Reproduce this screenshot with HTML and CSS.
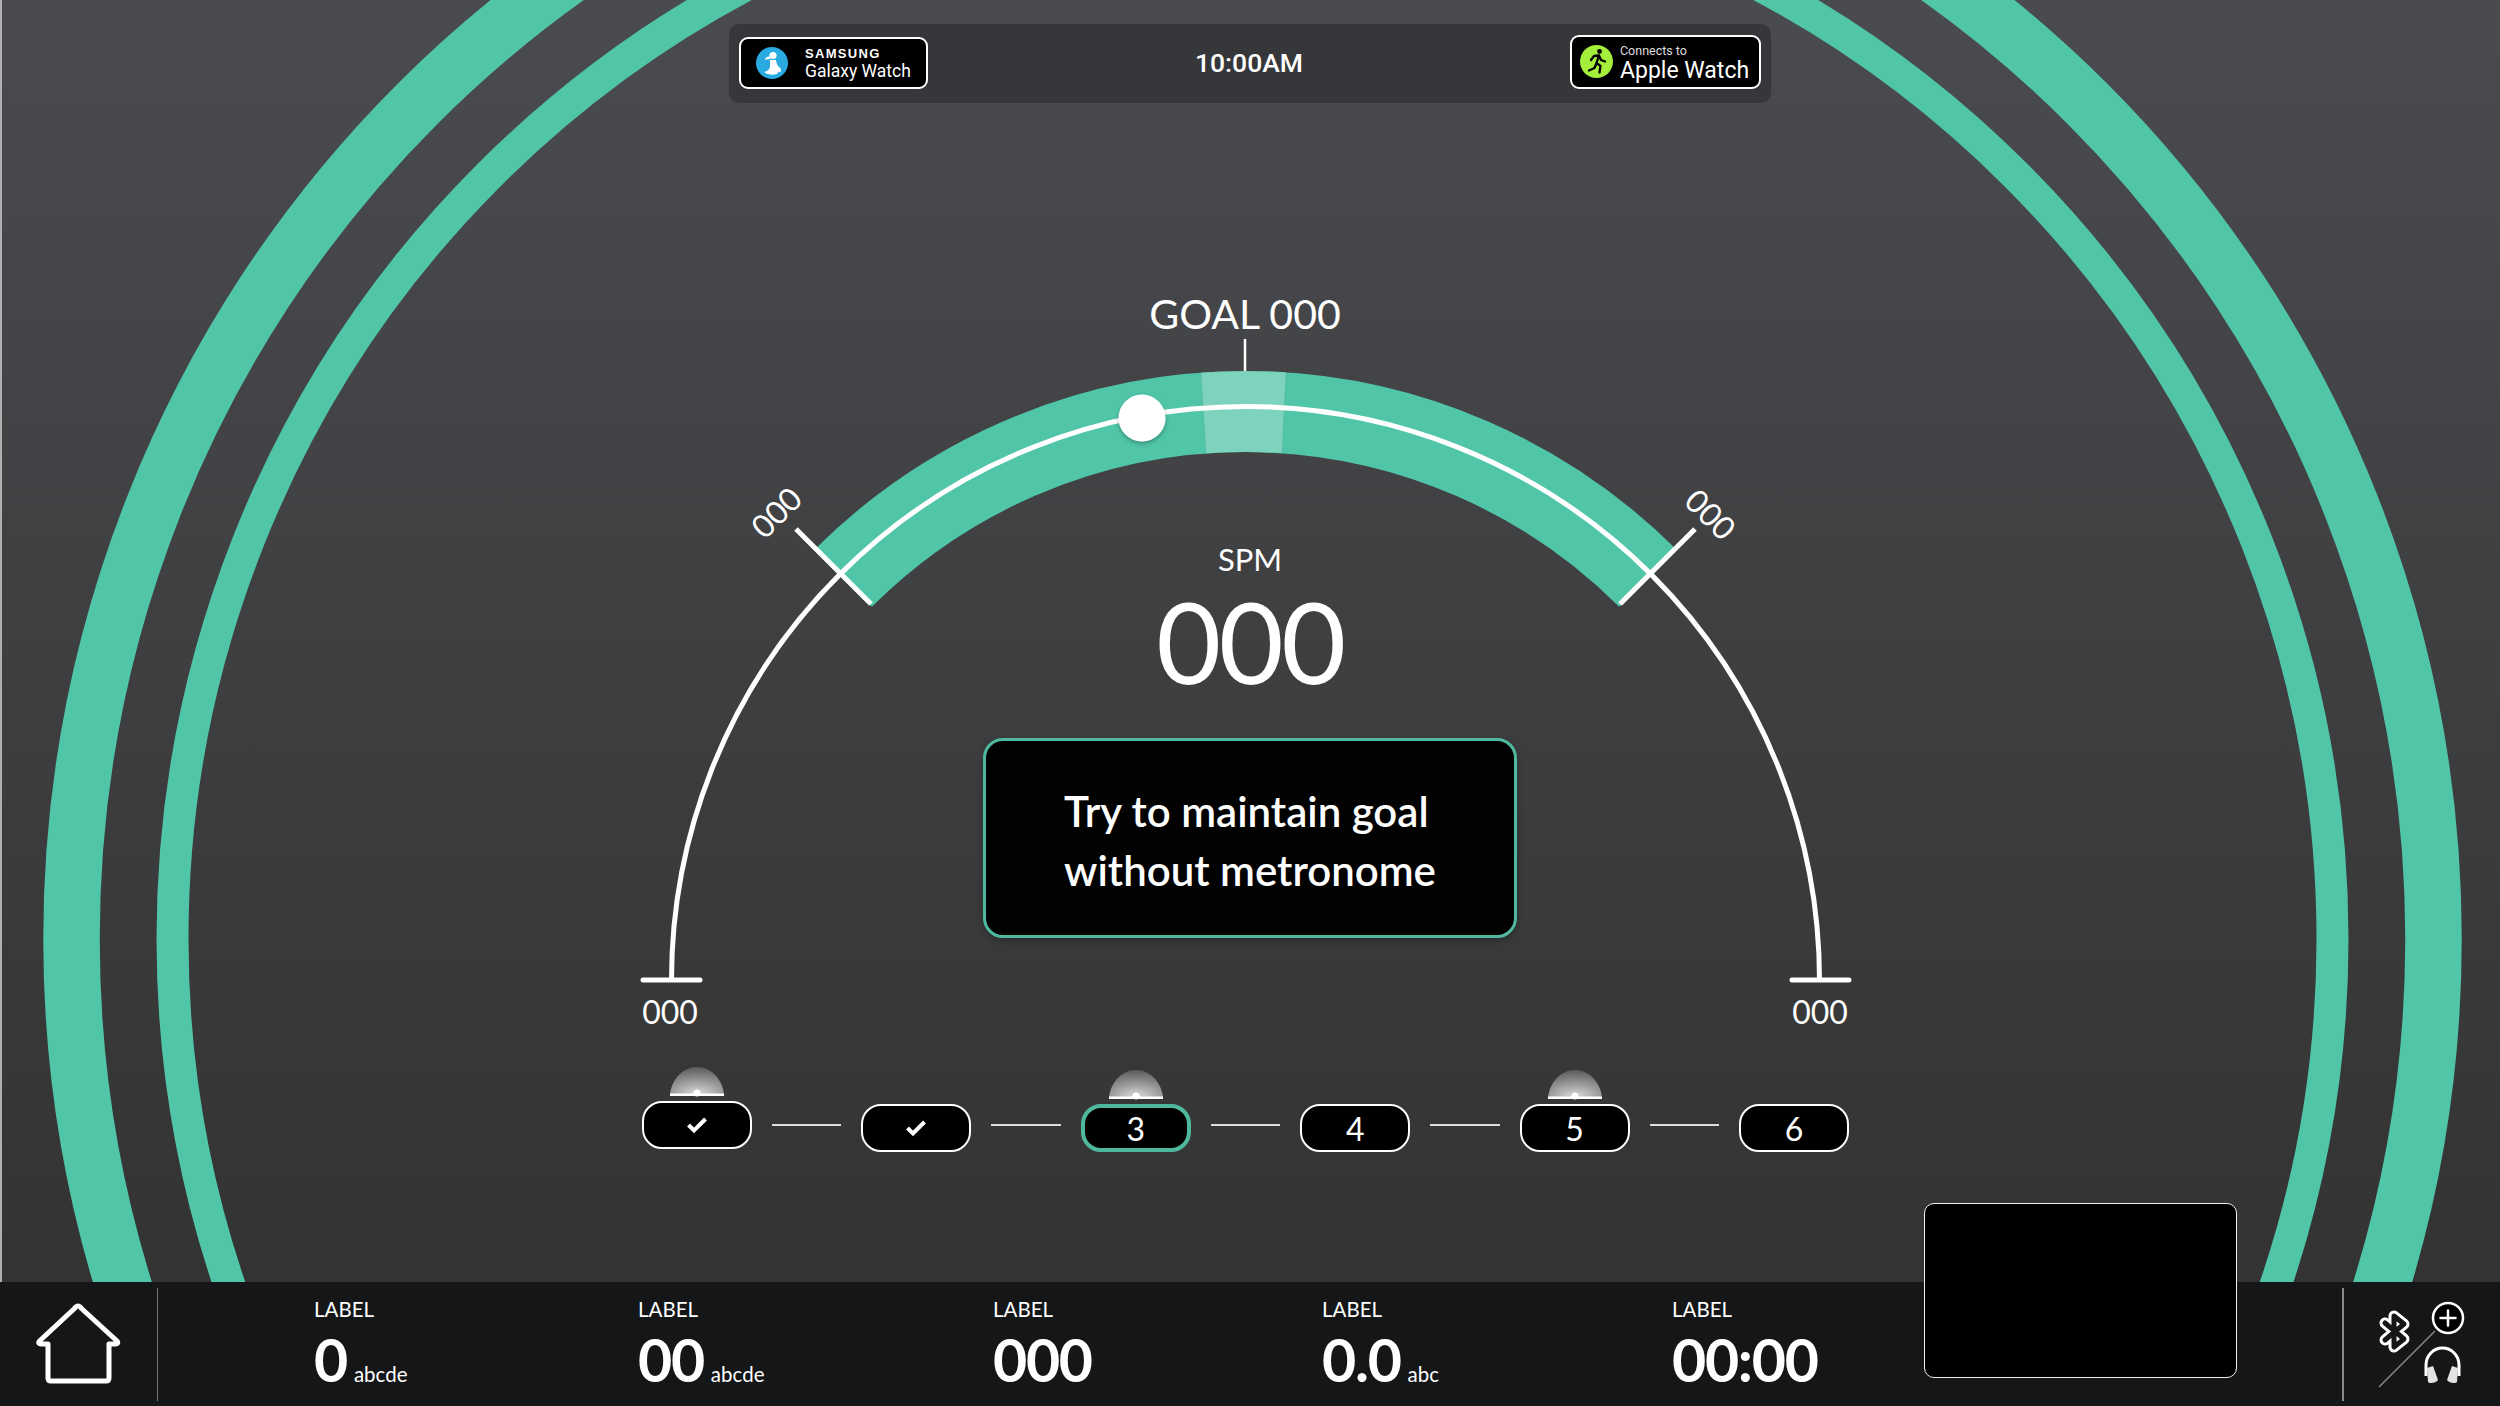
FILE: index.html
```html
<!DOCTYPE html>
<html lang="en">
<head>
  <meta charset="UTF-8" />
  <title>Cadence Workout</title>
  <link rel="stylesheet" href="styles.css">
</head>
<body>

  <main class="stage">
    <!-- rings and gauge are drawn on one canvas behind the content -->
    <svg class="canvas" viewBox="0 0 2500 1282" width="2500" height="1282">
      <defs>
        <filter id="dotShadow" x="-30%" y="-30%" width="160%" height="160%">
          <feDropShadow dx="0" dy="2" stdDeviation="2" flood-color="#000" flood-opacity="0.3"/>
        </filter>
      </defs>
      <circle class="ring" cx="1252.5" cy="939" r="1181" stroke-width="56.5"/>
      <circle class="ring" cx="1252.5" cy="939" r="1080" stroke-width="32"/>

      <path class="band" d="M843.2 578.2 A569 569 0 0 1 1647.8 578.2"/>
      <path class="goal-zone" d="M1201 372.6 A609.5 609.5 0 0 1 1286 372.3 L1282 453.3 A528.5 528.5 0 0 0 1206 453.5 Z"/>
      <path class="track" d="M671.5 980.5 A574 574 0 0 1 1819.5 980.5"/>
      <circle class="dot" cx="1142" cy="418" r="23.5" filter="url(#dotShadow)"/>

      <path class="tick" d="M1245 339 V371"/>
      <path class="tick-thick" d="M796 529 L871 604 M1695 529 L1620 604"/>
      <path class="tick-end" d="M643 980 H700 M1792 980 H1849"/>

      <text class="goal-text" x="1245" y="329">GOAL 000</text>
      <text class="limit-text" x="670" y="1024">000</text>
      <text class="limit-text" x="1820" y="1024">000</text>
      <text class="limit-text" transform="translate(777 513) rotate(-45)" y="11">000</text>
      <text class="limit-text" transform="translate(1710 515) rotate(45)" y="11">000</text>
    </svg>

    <div class="top-bar">
      <div class="badge badge-samsung">
        <svg class="badge-icon" viewBox="0 0 32 32" width="32" height="32">
          <circle cx="16" cy="16" r="16" fill="#29abe2"/>
          <circle cx="17" cy="8.5" r="3.6" fill="#fff"/>
          <path d="M14.5 9.5 C11 9 9.5 11 8.5 13 C10.5 12 12 12 13.5 12.5 Z" fill="#fff"/>
          <path d="M14 13 H20 C20.5 16 21 18 23 20 C25.5 21.5 25.5 24 24 25.5 L22 24.5 L21.5 26.5 C18 28.5 12 28 8 25 C10.5 24.5 12.5 23.5 13.5 21.5 C14.5 19 14 16 14 13 Z" fill="#fff"/>
        </svg>
        <div class="badge-text">
          <div class="samsung-name">SAMSUNG</div>
          <div class="samsung-watch">Galaxy Watch</div>
        </div>
      </div>
      <div class="clock">10:00AM</div>
      <div class="badge badge-apple">
        <svg class="badge-icon" viewBox="0 0 33 33" width="33" height="33">
          <circle cx="16.5" cy="16.5" r="16.5" fill="#a4ee3c"/>
          <circle cx="19.5" cy="6.5" r="2.4" fill="#000"/>
          <path d="M11 15 L14 11 L19 10.5 L21 15 L25 16.5 M19 10.5 L16.5 18 L20.5 21 L19.5 27.5 M16.5 18 L14.5 23 L9 25.5" fill="none" stroke="#000" stroke-width="2.3" stroke-linecap="round" stroke-linejoin="round"/>
        </svg>
        <div class="badge-text">
          <div class="apple-connect">Connects to</div>
          <div class="apple-watch">Apple Watch</div>
        </div>
      </div>
    </div>

    <div class="spm-label">SPM</div>
    <div class="spm-value">000</div>

    <div class="prompt">
      <p>Try to maintain goal<br>without metronome</p>
    </div>

    <div class="steps">
      <div class="step step-raised">
        <svg class="dome" viewBox="0 0 54 30" width="54" height="30"><use href="#domeShape"/></svg>
        <svg class="check" viewBox="0 0 22 18" width="22" height="18"><path d="M2.5 9 L8 14.5 L19.5 3"/></svg>
      </div>
      <div class="step-line"></div>
      <div class="step">
        <svg class="check" viewBox="0 0 22 18" width="22" height="18"><path d="M2.5 9 L8 14.5 L19.5 3"/></svg>
      </div>
      <div class="step-line"></div>
      <div class="step step-current">
        <svg class="dome" viewBox="0 0 54 30" width="54" height="30"><use href="#domeShape"/></svg>
        3
      </div>
      <div class="step-line"></div>
      <div class="step">4</div>
      <div class="step-line"></div>
      <div class="step">
        <svg class="dome" viewBox="0 0 54 30" width="54" height="30"><use href="#domeShape"/></svg>
        5
      </div>
      <div class="step-line"></div>
      <div class="step">6</div>
    </div>

    <div class="video-box"></div>
  </main>

  <footer class="stats-bar">
    <svg class="home-icon" viewBox="0 0 90 86" width="90" height="86">
      <path d="M44 3 C45.500 3 46.500 4 47.500 5.500 L83 38 C84.500 40 83.500 41 81.500 41 H75 V75 C75 77 74 78 72 78 H17 C15 78 14 77 14 75 V41 H7 C5 41 4 40 5.500 38 L40.500 5.500 C41.500 4 42.500 3 44 3 Z"/>
    </svg>
    <div class="divider"></div>

    <div class="stats">
      <div class="stat">
        <div class="stat-label">LABEL</div>
        <div class="stat-value">0<span class="stat-unit">abcde</span></div>
      </div>
      <div class="stat">
        <div class="stat-label">LABEL</div>
        <div class="stat-value">00<span class="stat-unit">abcde</span></div>
      </div>
      <div class="stat">
        <div class="stat-label">LABEL</div>
        <div class="stat-value">000</div>
      </div>
      <div class="stat">
        <div class="stat-label">LABEL</div>
        <div class="stat-value">0.0<span class="stat-unit">abc</span></div>
      </div>
      <div class="stat">
        <div class="stat-label">LABEL</div>
        <div class="stat-value">00:00</div>
      </div>
    </div>

    <div class="divider divider-right"></div>
    <svg class="device-icons" viewBox="0 0 156 124" width="156" height="124">
      <path d="M35 105 L91 49" stroke="#8a8a8a" stroke-width="1.5" fill="none"/>
      <path d="M41 41 L60 57 L50 65 V34 L60 42 L41 58" fill="none" stroke="#fff" stroke-width="11" stroke-linejoin="round" stroke-linecap="round"/>
      <path d="M41 41 L60 57 L50 65 V34 L60 42 L41 58" fill="none" stroke="#141618" stroke-width="5" stroke-linejoin="round" stroke-linecap="round"/>
      <circle cx="104" cy="36" r="15" fill="#000" stroke="#fff" stroke-width="2.5"/>
      <path d="M96.5 36 H111.5 M104 28.5 V43.5" stroke="#fff" stroke-width="2.5" stroke-linecap="round"/>
      <path d="M82 94 V83 A16.500 17 0 0 1 115 83 V94" fill="none" stroke="#fff" stroke-width="3"/>
      <path d="M83 86 L89 84 L94 98 C92 101 86 102 84 100 Z M114 86 L108 84 L103 98 C105 101 111 102 113 100 Z" fill="#e4e4e4"/>
    </svg>
  </footer>

  <svg class="defs-only" width="0" height="0">
    <defs>
      <radialGradient id="domeFill" cx="50%" cy="100%" r="100%">
        <stop offset="0" stop-color="#dcdcdc"/>
        <stop offset="0.5" stop-color="#989898"/>
        <stop offset="1" stop-color="#5a5a5a"/>
      </radialGradient>
      <g id="domeShape">
        <path d="M0 27 C2 11 14 0 27 0 C40 0 52 11 54 27 Z" fill="url(#domeFill)"/>
        <circle cx="27" cy="26" r="3.5" fill="#fff"/>
        <rect x="0" y="26.5" width="54" height="2.5" fill="#fff"/>
      </g>
    </defs>
  </svg>

</body>
</html>
```

FILE: styles.css
```css
* { box-sizing: border-box; }
html, body {
  margin: 0;
  padding: 0;
  width: 2500px;
  height: 1406px;
  overflow: hidden;
  background: #141618;
  color: #fff;
  font-family: 'Lato', sans-serif;
}
.stage {
  position: relative;
  height: 1282px;
  display: flex;
  flex-direction: column;
  align-items: center;
  overflow: visible;
  background:
    linear-gradient(#b0b0b0, #b0b0b0) left top / 2px 100% no-repeat,
    linear-gradient(180deg, #4a4b4f 0%, #333333 100%);
}
.canvas {
  position: absolute;
  left: 0;
  top: 0;
}
.defs-only {
  position: absolute;
}

/* gauge drawing */
.ring {
  fill: none;
  stroke: #50c5a8;
}
.band {
  fill: none;
  stroke: #50c5a8;
  stroke-width: 81;
}
.goal-zone {
  fill: #7dd3be;
  stroke: rgba(0, 0, 0, 0.06);
  stroke-width: 1;
}
.track {
  fill: none;
  stroke: #fff;
  stroke-width: 5;
}
.dot { fill: #fff; }
.tick {
  stroke: #fff;
  stroke-width: 2.5;
  fill: none;
}
.tick-thick {
  stroke: #fff;
  stroke-width: 5;
  fill: none;
}
.tick-end {
  stroke: #fff;
  stroke-width: 5;
  stroke-linecap: round;
  fill: none;
}
.goal-text {
  fill: #fff;
  font-size: 41px;
  font-weight: 400;
  text-anchor: middle;
}
.limit-text {
  fill: #fff;
  font-size: 32px;
  font-weight: 400;
  text-anchor: middle;
}

/* top strip */
.top-bar {
  position: relative;
  width: 1042px;
  height: 79px;
  margin-top: 24px;
  padding: 10px 10px 14px 10px;
  background: #36373a;
  border-radius: 10px;
  display: flex;
  justify-content: space-between;
  align-items: center;
}
.badge {
  display: flex;
  align-items: center;
  background: #000;
  border: 2px solid #fff;
  border-radius: 9px;
}
.badge-samsung {
  width: 189px;
  height: 52px;
  margin-top: 3px;
  padding-left: 15px;
  gap: 17px;
}
.badge-apple {
  width: 191px;
  height: 54px;
  padding-left: 8px;
  gap: 7px;
}
.samsung-name {
  font-family: 'Liberation Sans', sans-serif;
  font-size: 13px;
  font-weight: 700;
  letter-spacing: 1.3px;
  line-height: 16px;
}
.samsung-watch {
  font-family: 'Roboto', sans-serif;
  font-size: 17.5px;
  line-height: 18px;
}
.apple-connect {
  margin-top: 4px;
  font-family: 'Roboto', sans-serif;
  font-size: 12.5px;
  line-height: 14px;
  color: #ddd;
}
.apple-watch {
  font-family: 'Roboto', sans-serif;
  font-size: 23px;
  line-height: 25px;
}
.clock {
  margin-top: 2px;
  font-family: 'Roboto', sans-serif;
  font-size: 26.5px;
  font-weight: 500;
}

/* cadence readout */
.spm-label {
  position: relative;
  margin-top: 438px;
  font-size: 31px;
  line-height: 36px;
}
.spm-value {
  position: relative;
  margin-top: 9px;
  font-size: 112px;
  line-height: 110px;
  letter-spacing: -2.5px;
}
.prompt {
  position: relative;
  width: 534px;
  height: 200px;
  margin-top: 42px;
  padding-top: 5px;
  background: #020203;
  border: 3px solid #50b89f;
  border-radius: 20px;
  box-shadow: 0 3px 6px rgba(0, 0, 0, 0.25);
  display: flex;
  justify-content: center;
  align-items: center;
}
.prompt p {
  margin: 0;
  font-size: 42px;
  font-weight: 600;
  line-height: 59px;
}

/* interval steps */
.steps {
  position: relative;
  width: 1207px;
  margin-top: 163px;
  margin-right: 9px;
  display: flex;
  align-items: center;
  gap: 20px;
}
.step {
  position: relative;
  width: 110px;
  height: 48px;
  background: #000;
  border: 2px solid #fff;
  border-radius: 20px;
  display: flex;
  justify-content: center;
  align-items: center;
  font-size: 32px;
  font-weight: 400;
}
.step-raised { margin-bottom: 6px; }
.step-current { border: 4px solid #50b89f; }
.step-line {
  flex: 1;
  height: 2px;
  margin-bottom: 6px;
  background: #ddd;
}
.check path {
  fill: none;
  stroke: #fff;
  stroke-width: 4;
}
.dome {
  position: absolute;
  left: 50%;
  bottom: 100%;
  margin-left: -27px;
  margin-bottom: 6px;
}
.step-current .dome { margin-bottom: 8px; }
.video-box {
  position: absolute;
  left: 1924px;
  top: 1203px;
  width: 313px;
  height: 175px;
  background: #000;
  border: 1.5px solid #f0f0f0;
  border-radius: 10px;
  z-index: 2;
}

/* bottom bar */
.stats-bar {
  height: 124px;
  display: flex;
  align-items: stretch;
  background: #141618;
}
.home-icon {
  margin: 21px 0 0 34px;
}
.home-icon path {
  fill: none;
  stroke: #fff;
  stroke-width: 5;
  stroke-linejoin: round;
}
.divider {
  width: 1px;
  margin: 6px 0 5px 33px;
  background: #777;
}
.stats {
  margin-left: 156px;
  display: grid;
  grid-template-columns: 324px 355px 329px 350px 200px;
}
.stat {
  padding-top: 15px;
}
.stat-label {
  font-size: 20.5px;
  font-weight: 400;
  line-height: 24px;
}
.stat-value {
  margin-top: 6px;
  font-size: 59px;
  font-weight: 700;
  line-height: 66px;
  letter-spacing: -1.3px;
}
.stat-unit {
  margin-left: 7px;
  font-size: 20.5px;
  font-weight: 400;
  letter-spacing: 0;
}
.divider-right {
  width: 2px;
  margin-left: auto;
  background: #8a8a8a;
}
```
